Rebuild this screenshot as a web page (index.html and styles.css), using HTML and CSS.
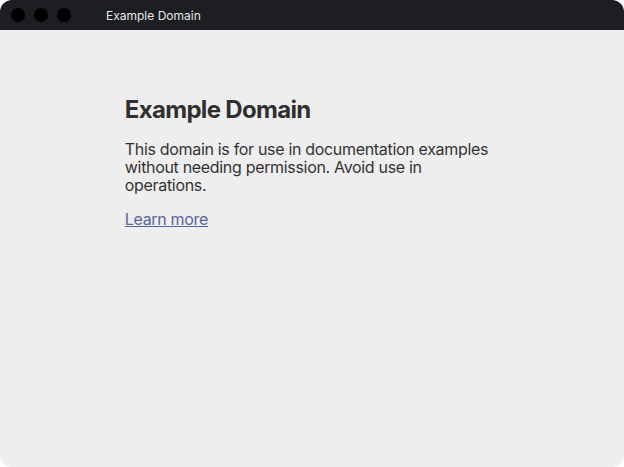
FILE: index.html
```html
<!DOCTYPE html>
<html lang="en">
<head>
    <meta charset="UTF-8">
    <meta name="viewport" content="width=device-width, initial-scale=1.0">
    <title>Example Domain</title>
    <link rel="stylesheet" href="styles.css">
</head>
<body>
    <div class="window">
        <div class="titlebar">
            <div class="dots">
                <span class="dot"></span>
                <span class="dot"></span>
                <span class="dot"></span>
            </div>
            <div class="title">Example Domain</div>
        </div>
        <div class="viewport">
            <div class="page">
                <h1>Example Domain</h1>
                <p>This domain is for use in documentation examples without needing permission. Avoid use in operations.</p>
                <p><a href="#">Learn more</a></p>
            </div>
        </div>
    </div>
</body>
</html>
```

FILE: styles.css
```css
body {
    margin: 0;
    padding: 0;
    background-color: #ffffff;
    font-family: Inter, "Noto Sans", sans-serif;
}

.window {
    height: 467px;
    display: flex;
    flex-direction: column;
    border-radius: 12px;
    overflow: hidden;
}

.titlebar {
    height: 30px;
    flex-shrink: 0;
    background-color: #1d1e22;
    display: flex;
    align-items: center;
}

.dots {
    display: flex;
    gap: 9px;
    padding-left: 11px;
}

.dot {
    width: 14px;
    height: 14px;
    border-radius: 50%;
    background-color: #000000;
}

.title {
    margin-left: 35px;
    font-size: 12px;
    color: #e6e6e8;
}

.viewport {
    flex: 1;
    background-color: #eeeeee;
}

.page {
    width: 60%;
    margin: 65px auto 0;
    opacity: 0.8;
    color: #000000;
}

h1 {
    font-size: 24px;
    font-weight: 700;
    line-height: 29px;
    letter-spacing: -0.028em;
    margin: 0 0 16px;
}

p {
    font-size: 16px;
    line-height: 18px;
    letter-spacing: -0.02em;
    margin: 0 0 16px;
}

a:link, a:visited {
    color: #334488;
}
```
